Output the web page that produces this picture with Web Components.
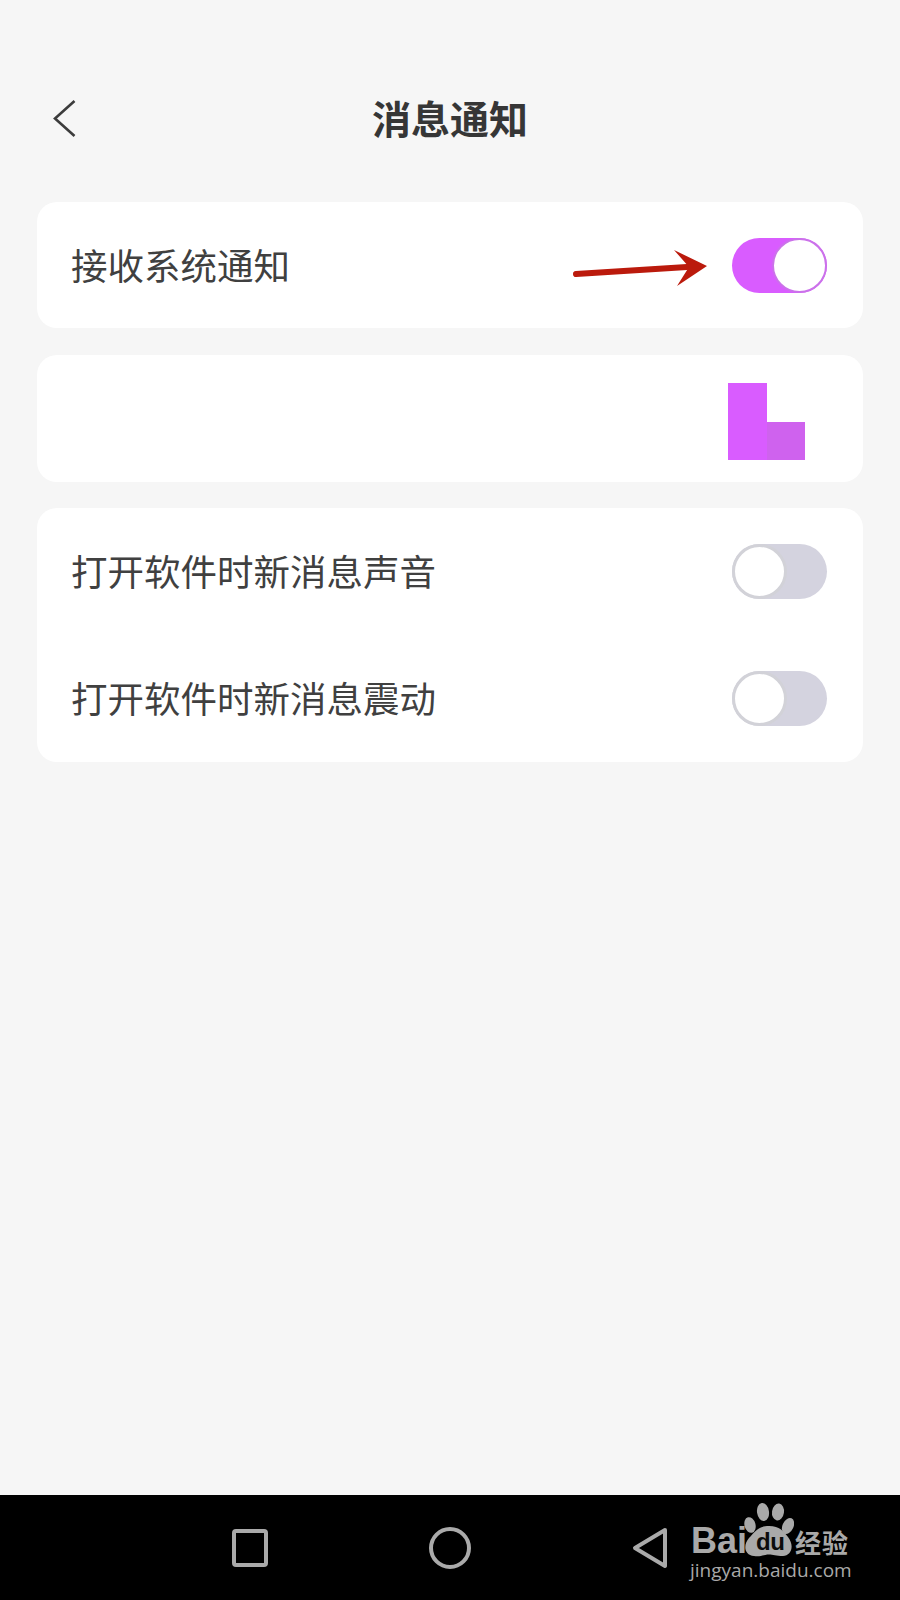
<!DOCTYPE html>
<html lang="zh-CN">
<head>
<meta charset="utf-8">
<title>消息通知</title>
<style>
html,body{margin:0;padding:0;background:#f6f6f6;}
body{width:900px;height:1600px;overflow:hidden;font-family:"Noto Sans CJK SC","Noto Sans",sans-serif;color:#3a3a3a;}
</style>
</head>
<body>
<notify-page>
  <app-header slot="header">消息通知</app-header>
  <settings-card first>
    <setting-row short>接收系统通知
      <red-arrow slot="extra"></red-arrow>
      <toggle-switch slot="control" on></toggle-switch>
    </setting-row>
  </settings-card>
  <settings-card>
    <setting-row>
      <erased-patch slot="control"></erased-patch>
    </setting-row>
  </settings-card>
  <settings-card>
    <setting-row>打开软件时新消息声音<toggle-switch slot="control"></toggle-switch></setting-row>
    <setting-row tail>打开软件时新消息震动<toggle-switch slot="control"></toggle-switch></setting-row>
  </settings-card>
  <nav-bar slot="footer"></nav-bar>
</notify-page>
<script>
function def(name, html){
  customElements.define(name, class extends HTMLElement{
    constructor(){super();this.attachShadow({mode:'open'}).innerHTML=html;}
  });
}
def('notify-page',`<style>
:host{display:flex;flex-direction:column;width:900px;height:1600px;background:#f6f6f6;}
.list{display:flex;flex-direction:column;gap:26px;padding:0 37px;flex:1;}
</style>
<slot name="header"></slot>
<div class="list"><slot></slot></div>
<slot name="footer"></slot>`);

def('app-header',`<style>
:host{display:grid;grid-template-columns:1fr auto 1fr;align-items:center;height:74px;margin:82px 0 46px;}
.back{padding-left:52px;display:flex;}
h1{margin:-4px 0 0;font:700 39px/74px "Noto Sans CJK SC",sans-serif;color:#363636;}
</style>
<div class="back"><svg width="26" height="40" viewBox="0 0 26 40" fill="none"><path d="M22.5 2 L3 19.5 L22.5 37" stroke="#3c3c3c" stroke-width="2.6"/></svg></div>
<h1><slot></slot></h1><div></div>`);

def('settings-card',`<style>
:host{display:block;background:#fff;border-radius:20px;}
:host([first]){margin-bottom:1px;}
</style><slot></slot>`);

def('setting-row',`<style>
:host{display:flex;align-items:center;justify-content:space-between;position:relative;height:127px;box-sizing:border-box;padding:0 36px 1px 34px;
font:400 36.5px/50px "Noto Sans CJK SC",sans-serif;color:#404040;}
:host([short]){height:126px;padding-bottom:0;}
:host([tail]){height:127px;padding-bottom:1px;}
.t{white-space:nowrap;}
</style><span class="t"><slot></slot></span><slot name="extra"></slot><slot name="control"></slot>`);

def('toggle-switch',`<style>
:host{display:block;position:relative;width:95px;height:55px;border-radius:28px;background:#d4d3df;flex:none;}
:host([on]){background:#d95cff;}
.k{position:absolute;top:0;left:0;width:55px;height:55px;box-sizing:border-box;border-radius:50%;background:#fff;border:3px solid #d2d2d8;}
:host([on]) .k{left:40px;border-color:#cb72ea;border-width:2.5px;}
</style><div class="k"></div>`);

def('red-arrow',`<style>
:host{position:absolute;left:530px;top:40px;width:140px;height:46px;display:block;}
svg{display:block;}
</style>
<svg width="140" height="46" viewBox="0 0 140 46" fill="none">
<path d="M9 32 L120 25" stroke="#bb1a0c" stroke-width="6" stroke-linecap="round"/>
<path d="M107 8 L140 24 L110 44 L122 25 Z" fill="#bb1a0c"/>
</svg>`);

def('erased-patch',`<style>
:host{display:block;width:77px;height:77px;margin:6px 22px 0 0;
background:linear-gradient(#d95cff,#d95cff) 0 0/39px 77px no-repeat,linear-gradient(#cf62ee,#cf62ee) 39px 39px/38px 38px no-repeat;}
</style>`);

def('nav-bar',`<style>
:host{display:flex;align-items:center;gap:161px;position:relative;height:105px;box-sizing:border-box;padding:0 0 0 232px;background:#000;flex:none;}
svg{display:block;}
.wm{position:absolute;left:690px;top:0;width:170px;height:105px;color:#a9a9a9;}
.bai{position:absolute;left:1px;top:31px;font:700 36px/30px "Liberation Sans",Arial,sans-serif;}
.paw{position:absolute;left:52px;top:6px;}
.du{position:absolute;left:66px;top:37px;font:700 24px/20px "Liberation Sans",Arial,sans-serif;color:#0c0c0c;letter-spacing:-.5px;}
.jy{position:absolute;left:105px;top:33px;font:700 26px/27px "Noto Sans CJK SC",sans-serif;white-space:nowrap;letter-spacing:1px;}
.url{position:absolute;left:0;top:62px;font:400 19px/26px "Open Sans",sans-serif;white-space:nowrap;}
</style>
<svg width="36" height="38" viewBox="0 0 36 38" fill="none"><rect x="2" y="2" width="32" height="34" rx="2" stroke="#aaa" stroke-width="4"/></svg>
<svg width="42" height="42" viewBox="0 0 42 42" fill="none" style="margin-top:1px"><circle cx="21" cy="21" r="19" stroke="#aaa" stroke-width="4"/></svg>
<svg width="35" height="42" viewBox="0 0 35 42" fill="none" style="margin-top:1px"><path d="M33 3 L3 21 L33 39 Z" stroke="#aaa" stroke-width="4" stroke-linejoin="round"/></svg>
<div class="wm">
  <span class="bai">Bai</span>
  <svg class="paw" width="52" height="62" viewBox="0 0 52 62" fill="#a9a9a9">
    <ellipse cx="21" cy="11" rx="6" ry="9" transform="rotate(-8 21 11)"/>
    <ellipse cx="36" cy="11" rx="6" ry="8.5" transform="rotate(8 36 11)"/>
    <ellipse cx="8" cy="24" rx="5.5" ry="8" transform="rotate(-15 8 24)"/>
    <ellipse cx="46" cy="25" rx="5.5" ry="8.5" transform="rotate(25 46 25)"/>
    <path d="M27 25 C38 25 41 30 46 36 C53 45 49 55 41 55 C34 55 31 53.500 27 53.500 C22 53.500 19 56 12 55 C2 54 1 44 7 37 C13 31 16 25 27 25 Z"/>
  </svg>
  <span class="du">du</span>
  <span class="jy">经验</span>
  <span class="url">jingyan.baidu.com</span>
</div>`);
</script>
</body>
</html>
